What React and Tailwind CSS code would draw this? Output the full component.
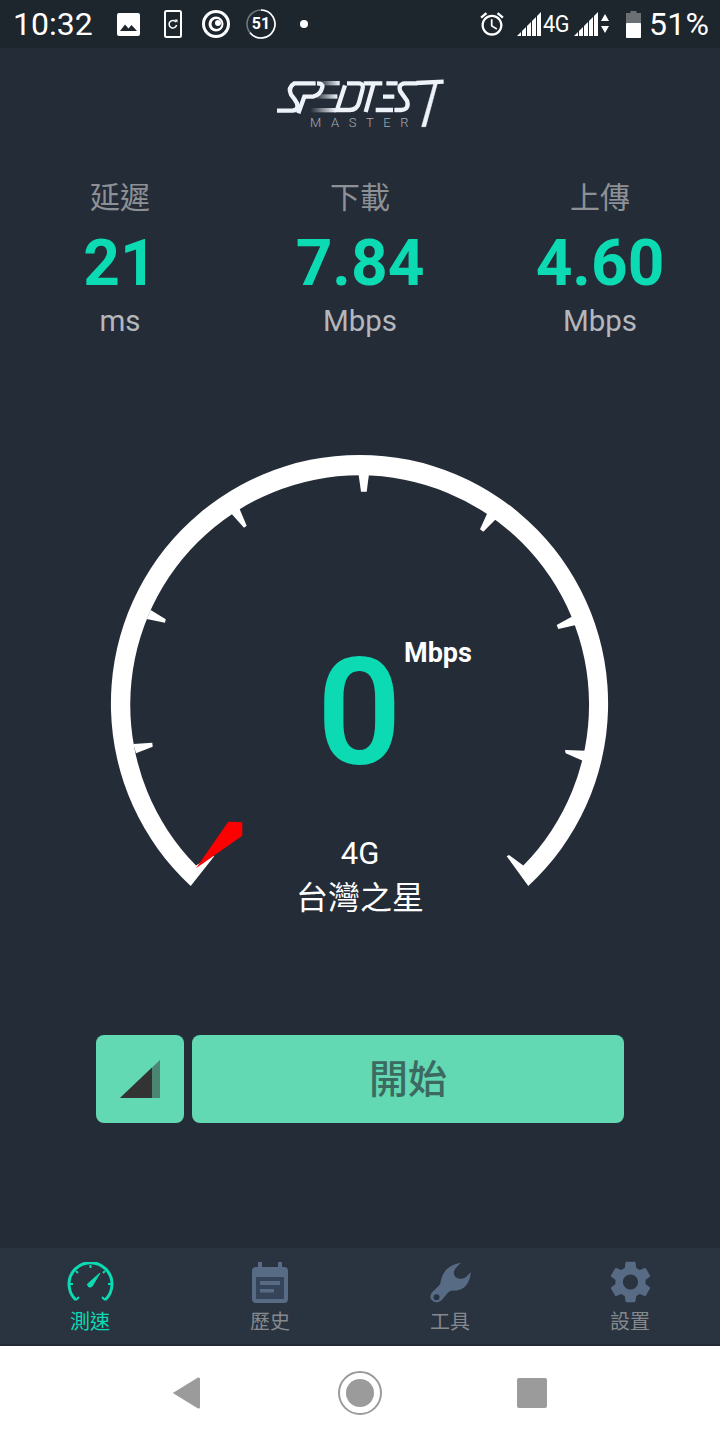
import React from 'react'

const cjk = { fontFamily: 'Roboto, "Noto Sans CJK TC", sans-serif' }

// gauge ticks, measured from the dial rim
const ticks = [
  '133.3,744 152.3,742.7 152.7,746.7 136,753.3',
  '150.7,610 165.7,619.3 165,622.7 146.7,619',
  '239.3,508.3 246.7,525.7 244,527.7 231.7,514',
  '369,474 366.7,491.7 361,491.7 358.5,474',
  '488.3,511 496,519 483.3,531.7 480,529.3',
  '571.7,616.7 576,625 558.3,629 556.7,625',
  '565,750 586,750.7 582.7,760.7 565.7,753.3',
]

function Gauge() {
  return (
    <svg className="block w-[520px] h-[460px]" viewBox="100 440 520 460">
      <path
        fill="#fff"
        d="M190.7 886 A248.6 248.6 0 1 1 528.3 886 L506.7 856.3 L509 855 L523.3 865.5 A229.4 229.4 0 1 0 196 865.5 L212.5 855 L214 856.5 Z"
      />
      {ticks.map((t) => <polygon key={t} points={t} fill="#fff" />)}
      <polygon points="196,868.3 228.3,821.7 242.3,822.3 242.3,835.7" fill="#ff0000" />
    </svg>
  )
}

function Logo() {
  return (
    <div className="relative w-[174px] h-[52px]">
      <svg className="block w-[174px] h-[52px]" viewBox="40 25 522 156" fill="none" stroke="#eef3f9" strokeWidth="13">
        <defs>
          <linearGradient id="blur" x1="0" x2="1" y1="0" y2="0">
            <stop offset="0" stopColor="#eef3f9" stopOpacity="0" />
            <stop offset="1" stopColor="#eef3f9" />
          </linearGradient>
        </defs>
        <path d="M52 120 H98 Q118 118 112 98 Q106 86 94 72 Q84 50 104 38 H168" />
        <path d="M116 128 L134 78 H160 Q182 74 188 50 Q190 38 172 38" />
        <g stroke="none" fill="url(#blur)">
          <rect x="178" y="31" width="62" height="13" />
          <rect x="165" y="71" width="68" height="13" />
          <rect x="152" y="112" width="76" height="13" />
        </g>
        <path d="M262 38 H298 Q314 39 308 58 L298 96 Q292 118 270 118 H232 L256 44" />
        <path d="M312 38 H368 M342 38 L318 124" />
        <path d="M380 38 H414 M370 78 H404 M348 118 H400" />
        <path d="M472 38 H434 Q414 42 422 62 L442 90 Q450 116 424 118 H404" />
        <path d="M470 37 L552 33" />
        <path d="M524 34 L486 168 L498 168 L534 34 Z" fill="#eef3f9" strokeWidth="2" />
      </svg>
      <span className="absolute left-[37px] top-[36px] text-[13px] leading-[16px] font-light text-[#a7adb5] tracking-[9.6px] whitespace-nowrap font-['Roboto']">
        MASTER
      </span>
    </div>
  )
}

function StatusBar() {
  return (
    <div className="h-[48px] bg-[#1d252d] flex items-center text-white font-['Roboto'] shrink-0">
      <span className="ml-[13px] w-[80px] text-[32px] leading-[48px] whitespace-nowrap">10:32</span>
      <svg className="ml-[24px] w-[23px] h-[23px]" viewBox="0 0 23 23">
        <rect width="23" height="23" rx="2" fill="#fff" />
        <path d="M3 18 L8 11.5 L11.5 15.5 L14.5 12 L20 18 Z" fill="#1d252d" />
      </svg>
      <svg className="ml-[24px] w-[18px] h-[28px]" viewBox="0 0 18 28" fill="none" stroke="#fff">
        <rect x="1" y="1" width="16" height="26" rx="1.5" strokeWidth="2" />
        <path d="M12 12 A3.8 3.8 0 1 0 12.6 15" strokeWidth="1.5" />
        <path d="M10.5 9.5 L13.5 9.5 L13.5 12.7 Z" fill="#fff" stroke="none" />
      </svg>
      <svg className="ml-[19px] w-[30px] h-[30px]" viewBox="0 0 30 30">
        <circle cx="15" cy="15" r="12.5" fill="none" stroke="#fff" strokeWidth="3" />
        <circle cx="15" cy="15" r="7.5" fill="#fff" />
        <circle cx="15.5" cy="15" r="5" fill="#1d252d" />
        <circle cx="17" cy="14" r="3" fill="#fff" />
      </svg>
      <div className="relative ml-[15px] w-[30px] h-[30px]">
        <svg className="absolute inset-0 w-[30px] h-[30px]" viewBox="0 0 30 30" fill="none" strokeWidth="1.6">
          <circle cx="15" cy="15" r="14" stroke="#70767c" />
          <path d="M15 1 A14 14 0 1 1 4 23.7" stroke="#fff" />
        </svg>
        <span className="absolute inset-0 flex items-center justify-center text-[16px] font-bold">51</span>
      </div>
      <span className="ml-[24px] w-[8px] h-[8px] rounded-full bg-white" />
      <svg className="ml-[170px] w-[28px] h-[28px]" viewBox="0 0 24 24" fill="#fff">
        <path d="M22 5.72l-4.6-3.86-1.29 1.53 4.6 3.86L22 5.72zM7.88 3.39L6.6 1.86 2 5.71l1.29 1.53 4.59-3.85zM12.5 8H11v6l4.75 2.85.75-1.23-4-2.37V8zM12 4c-4.97 0-9 4.03-9 9s4.03 9 9 9 9-4.03 9-9-4.03-9-9-9zm0 16c-3.87 0-7-3.13-7-7s3.13-7 7-7 7 3.13 7 7-3.13 7-7 7z" />
      </svg>
      <svg className="ml-[11px] w-[24px] h-[24px]" viewBox="0 0 24 24" fill="#fff">
        <path d="M0 24 L4 20 V24 Z M5 19 L9 15 V24 H5 Z M10 14 L14 10 V24 H10 Z M15 9 L19 5 V24 H15 Z M20 4 L24 0 V24 H20 Z" />
      </svg>
      <span className="ml-[2px] text-[24px] leading-[24px] tracking-[-0.5px] w-[29px] scale-x-90 origin-left">4G</span>
      <svg className="ml-[2px] w-[24px] h-[24px]" viewBox="0 0 24 24" fill="#fff">
        <path d="M0 24 L4 20 V24 Z M5 19 L9 15 V24 H5 Z M10 14 L14 10 V24 H10 Z M15 9 L19 5 V24 H15 Z M20 4 L24 0 V24 H20 Z" />
      </svg>
      <svg className="ml-[3px] w-[8px] h-[20px]" viewBox="0 0 8 20" fill="#fff">
        <path d="M4 0 L8 7 H0 Z M0 12 H8 L4 19 Z" />
      </svg>
      <svg className="ml-[17px] w-[15px] h-[27px]" viewBox="0 0 15 27">
        <path d="M4.5 0 H10.5 V2 H15 V27 H0 V2 H4.5 Z" fill="#6b7075" />
        <rect y="12" width="15" height="15" rx="1" fill="#fff" />
      </svg>
      <span className="ml-[8px] text-[32px] leading-[48px] tracking-[0.3px] whitespace-nowrap">51%</span>
    </div>
  )
}

function Stat({ label, value, unit }) {
  return (
    <div className="flex flex-col items-center">
      <span className="text-[30px] leading-[40px] text-[#8d9196]">{label}</span>
      <span className="mt-[11px] text-[64px] leading-[70px] font-bold text-[#0cdab2]">{value}</span>
      <span className="mt-[2px] text-[29.5px] leading-[40px] text-[#b4b7bb]">{unit}</span>
    </div>
  )
}

function NavItem({ label, active, children }) {
  return (
    <div className="flex flex-col items-center">
      <div className="h-[48px] mt-[10px] flex items-center justify-center">{children}</div>
      <span className={`mt-[3px] text-[20px] leading-[26px] ${active ? 'text-[#0cdab2]' : 'text-[#85898e]'}`}>{label}</span>
    </div>
  )
}

export default function App() {
  return (
    <div className="w-[720px] h-[1440px] flex flex-col bg-[#242c38] overflow-hidden" style={cjk}>
      <StatusBar />

      <div className="flex justify-center pt-[31px] h-[130px] shrink-0">
        <Logo />
      </div>

      {/* results */}
      <div className="grid grid-cols-3 shrink-0">
        <Stat label="延遲" value="21" unit="ms" />
        <Stat label="下載" value="7.84" unit="Mbps" />
        <Stat label="上傳" value="4.60" unit="Mbps" />
      </div>

      {/* dial */}
      <div className="relative w-[520px] h-[460px] ml-[100px] mt-[99px] shrink-0">
        <Gauge />
        <span className="absolute left-[217px] top-[189px] text-[148px] leading-[170px] font-semibold text-[#0cdab2]">0</span>
        <span className="absolute left-[304px] top-[197px] text-[27px] leading-[32px] font-bold text-white">Mbps</span>
        <div className="absolute left-0 right-[0px] top-[394px] flex flex-col items-center text-white">
          <span className="text-[31px] leading-[40px]">4G</span>
          <span className="text-[32px] leading-[48px]">台灣之星</span>
        </div>
      </div>

      {/* actions */}
      <div className="flex gap-[8px] ml-[96px] mt-[135px] shrink-0">
        <div className="w-[88px] h-[88px] rounded-lg bg-[#62d8b3] flex items-center justify-center">
          <svg className="w-[40px] h-[38px]" viewBox="0 0 40 38">
            <polygon points="0,38 40,0 40,38" fill="#333" fillOpacity="0.5" />
            <polygon points="0,38 32,7.6 32,38" fill="#333" />
          </svg>
        </div>
        <div className="w-[432px] h-[88px] pt-[2px] rounded-lg bg-[#62d8b3] flex items-center justify-center text-[39px] font-medium text-[#3d6a60]">
          開始
        </div>
      </div>

      {/* tab bar */}
      <div className="mt-[125px] h-[98px] grid grid-cols-4 bg-[#2a3340] border-b-2 border-[#232a35] shrink-0">
        <NavItem label="測速" active>
          <svg className="w-[47px] h-[40px]" viewBox="0 0 47 40" fill="none" stroke="#0cdab2">
            <path d="M9 38 A21.5 21.5 0 1 1 38 38" strokeWidth="3" />
            <path d="M9 38 L12 35 M38 38 L35 35 M23.5 3 V6 M3 22 H6 M44 22 H41 M9 9 L11 11 M38 9 L36 11" strokeWidth="2" />
            <path d="M20.5 22 L33 11 L25 24.5 Q21 26.5 20.5 22 Z" fill="#0cdab2" stroke="#0cdab2" strokeWidth="1" />
          </svg>
        </NavItem>
        <NavItem label="歷史">
          <svg className="w-[36px] h-[41px]" viewBox="0 0 36 41">
            <path d="M6 0 H10 V5 H26 V0 H30 V5 H32 Q36 5 36 9 V37 Q36 41 32 41 H4 Q0 41 0 37 V9 Q0 5 4 5 H6 Z" fill="#586b85" />
            <rect x="4" y="15" width="28" height="22" fill="#36445a" />
            <rect x="8" y="19" width="20" height="4" fill="#586b85" />
            <rect x="8" y="27" width="14" height="3.5" fill="#586b85" />
          </svg>
        </NavItem>
        <NavItem label="工具">
          <svg className="w-[47px] h-[45px]" viewBox="200 60 140 135">
            <path
              fillRule="evenodd"
              fill="#586b85"
              d="M302 68 Q250 76 241 122 Q241 132 234 138 L216 155 Q204 170 214 181 Q228 194 244 180 L262 158 Q270 150 282 152 Q326 150 331 96 L316 112 Q298 122 284 110 Q270 94 302 68 Z M228 163 A9 9 0 1 0 228.1 181 A9 9 0 1 0 228 163 Z"
            />
          </svg>
        </NavItem>
        <NavItem label="設置">
          <svg className="w-[41px] h-[42px]" viewBox="2.4 2 19.2 20">
            <path
              fill="#586b85"
              d="M19.14 12.94c.04-.3.06-.61.06-.94 0-.32-.02-.64-.07-.94l2.03-1.58c.18-.14.23-.41.12-.61l-1.92-3.32c-.12-.22-.37-.29-.59-.22l-2.39.96c-.5-.38-1.03-.7-1.62-.94l-.36-2.54c-.04-.24-.24-.41-.48-.41h-3.84c-.24 0-.43.17-.47.41l-.36 2.54c-.59.24-1.13.57-1.62.94l-2.39-.96c-.22-.08-.47 0-.59.22L2.74 8.87c-.12.21-.08.47.12.61l2.03 1.58c-.05.3-.09.63-.09.94s.02.64.07.94l-2.03 1.58c-.18.14-.23.41-.12.61l1.92 3.32c.12.22.37.29.59.22l2.39-.96c.5.38 1.03.7 1.62.94l.36 2.54c.05.24.24.41.48.41h3.84c.24 0 .44-.17.47-.41l.36-2.54c.59-.24 1.13-.56 1.62-.94l2.39.96c.22.08.47 0 .59-.22l1.92-3.32c.12-.22.07-.47-.12-.61l-2.01-1.58zM12 15.6c-1.98 0-3.6-1.62-3.6-3.6s1.62-3.6 3.6-3.6 3.6 1.62 3.6 3.6-1.62 3.6-3.6 3.6z"
            />
          </svg>
        </NavItem>
      </div>

      {/* android nav */}
      <div className="flex-1 bg-white flex items-center">
        <svg className="ml-[172px] w-[28px] h-[32px]" viewBox="0 0 28 32">
          <path d="M0.8 16 L26 0.6 Q28 0 28 2 V30 Q28 32 26 31.4 Z" fill="#9b9b9b" />
        </svg>
        <div className="ml-[138px] w-[44px] h-[44px] rounded-full border-2 border-[#9b9b9b] flex items-center justify-center">
          <div className="w-[28px] h-[28px] rounded-full bg-[#9b9b9b]" />
        </div>
        <div className="ml-[135px] w-[30px] h-[30px] rounded-[2px] bg-[#9b9b9b]" />
      </div>
    </div>
  )
}
